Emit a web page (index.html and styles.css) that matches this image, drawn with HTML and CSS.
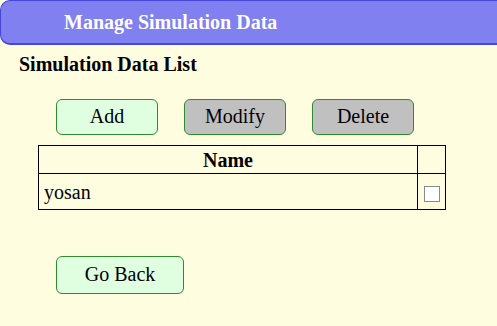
FILE: index.html
```html
<!DOCTYPE html>
<html lang="en">
  <head>
    <meta charset="UTF-8" />
    <title>Manage Simulation Data</title>
    <link rel="stylesheet" href="styles.css">
  </head>
  <body>
    <div class="header">Manage Simulation Data</div>

    <h2 class="list-title">Simulation Data List</h2>

    <div class="actions">
      <button class="btn btn-on">Add</button>
      <button class="btn btn-off">Modify</button>
      <button class="btn btn-off">Delete</button>
    </div>

    <table class="data-table">
      <tr>
        <th class="name-col">Name</th>
        <th class="check-col"></th>
      </tr>
      <tr>
        <td class="name-col">yosan</td>
        <td class="check-col"><span class="check"></span></td>
      </tr>
    </table>

    <div class="footer">
      <button class="btn btn-on btn-wide">Go Back</button>
    </div>
  </body>
</html>
```

FILE: styles.css
```css
body {
  margin: 0;
  font-family: "Liberation Serif", serif;
  background: #fffde0;
  overflow: hidden;
}

.header {
  height: 42px;
  margin-right: -20px;
  padding-left: 63px;
  background: #8080f0;
  border: 1px solid #4545e0;
  border-bottom-width: 2px;
  border-radius: 10px;
  color: #fff;
  font-size: 20px;
  font-weight: bold;
  line-height: 42px;
}

.list-title {
  margin: 8px 0 0 19px;
  font-size: 20px;
  font-weight: bold;
  line-height: 22px;
}

.actions {
  display: flex;
  gap: 26px;
  padding: 24px 0 0 56px;
}

.btn {
  width: 102px;
  height: 36px;
  padding: 0 0 2px;
  border: 1px solid #2e8b2e;
  border-radius: 6px;
  font-family: "Liberation Serif", serif;
  font-size: 20px;
  color: #000;
  cursor: pointer;
}

.btn-on {
  background: #e0ffe0;
}

.btn-off {
  background: #c0c0c0;
}

.btn-wide {
  width: 128px;
  height: 38px;
}

.data-table {
  margin: 10px 0 0 38px;
  width: 408px;
  border-collapse: collapse;
  font-size: 20px;
}

.data-table th,
.data-table td {
  border: 1px solid #000;
  padding: 0 5px;
  line-height: 22px;
}

.data-table th {
  height: 27px;
  font-weight: bold;
}

.data-table td {
  height: 35px;
}

.check-col {
  width: 17px;
  text-align: center;
}

.check {
  display: inline-block;
  width: 14px;
  height: 14px;
  border: 1px solid #8a8a8a;
  background: #fff;
  vertical-align: middle;
}

.footer {
  padding: 46px 0 0 56px;
}
```
